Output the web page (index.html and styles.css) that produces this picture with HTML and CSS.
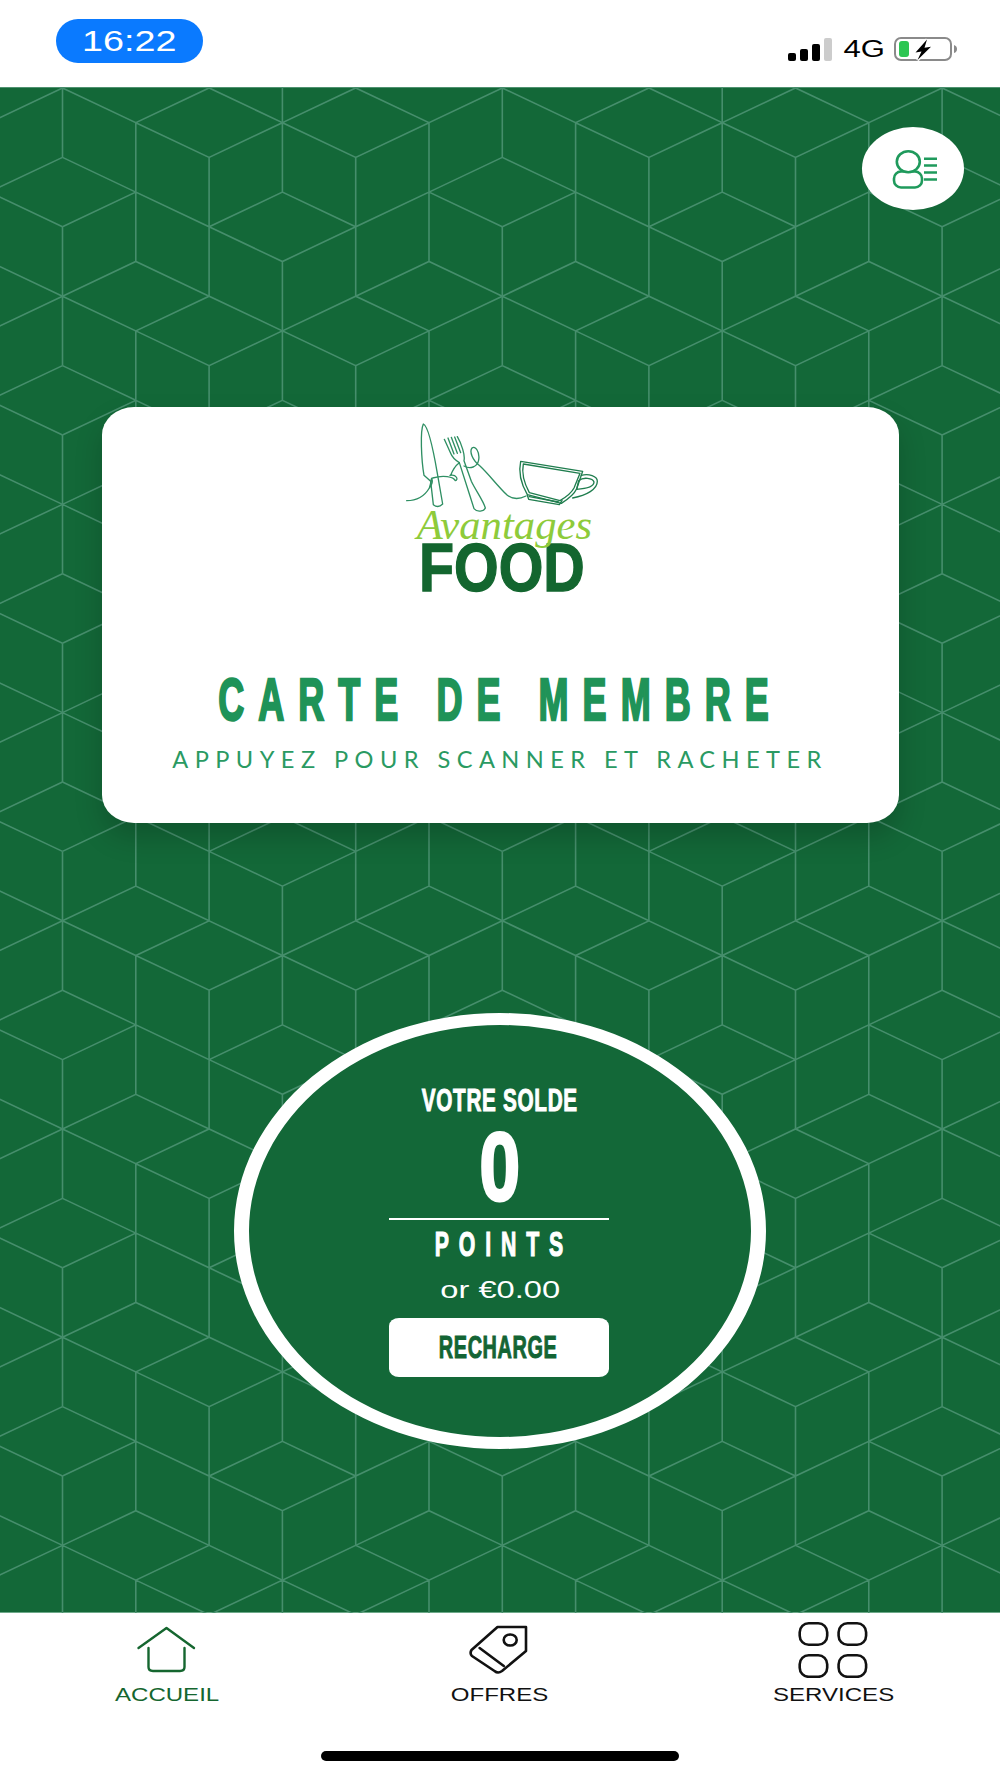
FILE: index.html
```html
<!DOCTYPE html>
<html lang="fr">
<head>
<meta charset="utf-8">
<title>Avantages Food</title>
<link rel="stylesheet" href="styles.css">
</head>
<body>
<div class="app">
  <header class="status">
    <div class="clock"><span class="clock-text">16:22</span></div>
    <div class="status-right">
      <svg class="signal" width="44" height="23" viewBox="0 0 44 23">
        <rect x="0" y="15" width="8" height="8" rx="2" fill="#000"/>
        <rect x="12" y="11" width="8" height="12" rx="2" fill="#000"/>
        <rect x="24" y="6" width="8" height="17" rx="2" fill="#000"/>
        <rect x="36" y="0" width="8" height="23" rx="2" fill="#ccc"/>
      </svg>
      <span class="net">4G</span>
      <svg class="battery" width="64" height="24" viewBox="0 0 64 24">
        <rect x="1" y="1" width="56" height="22" rx="6" fill="#fff" stroke="#8a8a8a" stroke-width="2"/>
        <path d="M60 8 q3 1 3 4 t-3 4 z" fill="#8a8a8a"/>
        <rect x="5" y="4" width="10" height="16" rx="3" fill="#2dc653"/>
        <path d="M33 2.500 L21.500 15.500 L27.500 14.500 L23.500 23 L37 9.800 L30.500 10.800 Z" fill="#000" stroke="#fff" stroke-width="3" paint-order="stroke"/>
      </svg>
    </div>
  </header>

  <main class="main">
    <svg class="pattern" width="1000" height="1526" viewBox="0 0 1000 1526" aria-hidden="true">
      <defs>
        <path id="tile" d="M0 0V69.4M0 138.8V208.2M73.3 34.7V173.5M146.6 69.4V208.2M219.9 34.7V104.1M219.9 173.5V242.9M293.2 69.4V208.2M366.5 34.7V173.5M0 0L73.3 34.7L146.6 0L219.9 34.7L293.2 0L366.5 34.7L439.8 0M73.3 34.7L146.6 69.4L219.9 34.7L293.2 69.4L366.5 34.7M0 69.4L73.3 104.1M366.5 104.1L439.8 69.4M0 138.8L73.3 104.1L146.6 138.8L219.9 104.1L293.2 138.8L366.5 104.1L439.8 138.8M146.6 138.8L219.9 173.5L293.2 138.8M0 208.2L73.3 173.5L146.6 208.2M293.2 208.2L366.5 173.5L439.8 208.2"/>
        <g id="tile-row">
          <use href="#tile" x="-377.3"/>
          <use href="#tile" x="62.5"/>
          <use href="#tile" x="502.3"/>
          <use href="#tile" x="942.1"/>
        </g>
      </defs>
      <g class="pattern-lines">
        <use href="#tile-row" y="-207.2"/>
        <use href="#tile-row" y="1"/>
        <use href="#tile-row" y="209.2"/>
        <use href="#tile-row" y="417.4"/>
        <use href="#tile-row" y="625.6"/>
        <use href="#tile-row" y="833.8"/>
        <use href="#tile-row" y="1042"/>
        <use href="#tile-row" y="1250.2"/>
        <use href="#tile-row" y="1458.4"/>
      </g>
    </svg>

    <div class="content">
      <button class="profile" aria-label="Profil">
        <svg width="50" height="40" viewBox="0 0 50 40" fill="none" stroke="#1f9a5c" stroke-width="2.600">
          <rect x="6" y="22.5" width="28" height="16" rx="7"/>
          <ellipse cx="20.3" cy="12.7" rx="11.5" ry="10.500" fill="#fff"/>
          <path d="M36 9.8H49M36 16.5H49M36 23.5H49M36 30.5H49"/>
        </svg>
      </button>

      <section class="card">
        <svg class="logo" width="220" height="195" viewBox="0 0 660 585">
          <g fill="none" stroke="#2f8f63" stroke-width="4" stroke-linejoin="round" stroke-linecap="round">
            <path d="M100 42C90 62 94 150 102 196L122 214L130 284C140 292 150 290 158 282L142 190C130 120 114 48 100 42Z"/>
            <path d="M163 88L182 130C188 146 198 152 208 158L240 258L252 296C262 308 282 304 286 294C280 272 256 240 244 214L222 152C226 136 214 100 202 80M174 84L192 132M184 82L202 130M194 81L212 128"/>
            <path d="M208 158C200 164 190 174 182 196M50 272C84 272 104 258 118 234C126 214 120 204 128 204C160 194 190 200 196 212C206 210 200 192 180 196M118 234C124 226 130 220 126 208"/>
            <path d="M222 168C240 178 262 172 266 150C270 126 256 106 246 114C238 124 246 150 270 168C300 196 320 226 352 256C368 268 384 270 408 258"/>
          </g>
          <g fill="none" stroke="#1f7d4e" stroke-width="4" stroke-linejoin="round" stroke-linecap="round">
            <path d="M392 154L578 184L560 236C552 254 536 266 514 280L412 254C396 226 384 190 392 154Z"/>
            <path d="M400 162L570 190L552 234C544 250 530 260 510 272L418 248C404 222 394 192 400 162Z"/>
            <path d="M412 256L416 268L508 284L516 272M418 260L506 276"/>
            <path d="M574 196C596 190 622 198 622 214C622 238 590 256 548 264M566 212C580 200 608 204 612 216C612 230 590 236 560 238L566 212Z"/>
          </g>
          <text class="logo-food" transform="translate(87 542) scale(.84 1)">FOOD</text>
          <text class="logo-script" x="80" y="386">Avantages</text>
        </svg>
        <h1 class="card-title">CARTE DE MEMBRE</h1>
        <p class="card-sub">APPUYEZ POUR SCANNER ET RACHETER</p>
      </section>

      <section class="balance">
        <div class="balance-label">VOTRE SOLDE</div>
        <div class="balance-value">0</div>
        <div class="balance-rule"></div>
        <div class="balance-unit">POINTS</div>
        <div class="balance-money"><span>or €0.00</span></div>
        <button class="recharge"><span>RECHARGE</span></button>
      </section>
    </div>
  </main>

  <footer class="tabbar">
    <nav class="tabs">
      <a class="tab tab-active">
        <svg width="80" height="56" viewBox="0 0 80 56" fill="none" stroke="currentColor" stroke-width="2.4" stroke-linecap="round" stroke-linejoin="round">
          <path d="M11.5 26L39.5 6L67 26"/>
          <path d="M21.500 26V45Q21.500 49 26 49H53Q57.500 49 57.500 45V26"/>
        </svg>
        <span class="tab-label">ACCUEIL</span>
      </a>
      <a class="tab">
        <svg width="80" height="56" viewBox="0 0 80 56" fill="none" stroke="currentColor" stroke-width="2.6" stroke-linecap="round" stroke-linejoin="round">
          <path d="M37.5 5H66V29L42 49Q38 52 34.500 49L12 34Q9.500 31.500 11.500 28Z"/>
          <path d="M19.600 26L43.800 44"/>
          <ellipse cx="50.200" cy="18" rx="6.500" ry="5.500"/>
        </svg>
        <span class="tab-label">OFFRES</span>
      </a>
      <a class="tab">
        <svg width="80" height="56" viewBox="0 0 80 56" fill="none" stroke="currentColor" stroke-width="2.6">
          <rect x="6.700" y="1.300" width="27.500" height="21.500" rx="9"/>
          <rect x="45.600" y="1.300" width="27.500" height="21.500" rx="9"/>
          <rect x="6.700" y="33.300" width="27.500" height="21.500" rx="9"/>
          <rect x="45.600" y="33.300" width="27.500" height="21.500" rx="9"/>
        </svg>
        <span class="tab-label">SERVICES</span>
      </a>
    </nav>
    <div class="home-indicator"></div>
  </footer>
</div>
</body>
</html>
```

FILE: styles.css
```css
* { box-sizing: border-box; }
html, body { margin: 0; padding: 0; background: #fff; }
body { font-family: "Liberation Sans", Arial, sans-serif; color: #000; }

.app { width: 1000px; height: 1778px; display: flex; flex-direction: column; overflow: hidden; }

/* Status bar */
.status { height: 87px; flex: none; display: flex; align-items: flex-start; padding: 19px 42px 0 56px; background: #fff; }
.clock { width: 147px; height: 44px; border-radius: 22px; background: #0a7aff; display: flex; align-items: center; justify-content: center; }
.clock-text { color: #fff; font-size: 29px; line-height: 44px; display: inline-block; transform: scaleX(1.3); }
.status-right { margin-left: auto; margin-top: 18px; display: flex; align-items: center; }
.signal { display: block; }
.net { width: 31px; margin: 0 14px 0 17.500px; font-size: 23px; line-height: 23px; display: inline-block; white-space: nowrap; transform: scaleX(1.35); }
.battery { display: block; }

/* Main */
.main { position: relative; flex: 1; background: #136838; border-top: 1px solid #4f9270; border-bottom: 1px solid #6ea98a; }
.pattern { position: absolute; top: -1px; left: 0; display: block; }
.pattern-lines { fill: none; stroke: #468e6c; stroke-width: 1.600; }
.content { position: relative; display: flex; flex-direction: column; align-items: center; padding-top: 39px; }

.profile { align-self: flex-end; margin-right: 36px; width: 102px; height: 83px; border: 0; padding: 0; border-radius: 50%; background: #fff; display: flex; align-items: center; justify-content: center; }
.profile svg { display: block; }

/* Card */
.card { margin-top: 197px; width: 797px; height: 416px; padding-top: 3px; border-radius: 32px / 28px; background: #fff; box-shadow: 0 14px 28px rgba(0, 0, 0, .18); display: flex; flex-direction: column; align-items: center; }
.logo { display: block; flex: none; overflow: visible; }
.logo-food { font-family: "Liberation Sans", Arial, sans-serif; font-weight: 700; font-size: 205px; fill: #13662f; stroke: #13662f; stroke-width: 4px; }
.logo-script { font-family: "Liberation Serif", serif; font-style: italic; font-size: 128px; fill: #8ecb3a; }
.card-title { margin: 65px 0 0; font-size: 60px; line-height: 60px; font-weight: 700; letter-spacing: 23.400px; color: #1f9358; -webkit-text-stroke: 2.400px #1f9358; white-space: nowrap; transform: scaleX(.6); }
.card-sub { margin: 14.500px 0 0; font-family: Lato, sans-serif; font-size: 23.600px; line-height: 28px; font-weight: 400; letter-spacing: 6.440px; color: #2a9a62; white-space: nowrap; }

/* Balance */
.balance { margin-top: 190px; width: 532px; height: 436px; border-style: solid; border-color: #fff; border-width: 12px 15px; border-radius: 50%; background: #136838; padding-top: 60px; display: flex; flex-direction: column; align-items: center; color: #fff; }
.balance-label { font-size: 30.500px; line-height: 30px; font-weight: 700; -webkit-text-stroke: 1px #fff; letter-spacing: 1px; white-space: nowrap; transform: scaleX(.68); }
.balance-value { margin-top: 12px; font-size: 96px; line-height: 80px; font-weight: 700; -webkit-text-stroke: 3px #fff; transform: scaleX(.76); }
.balance-rule { margin: 11px 2px 0 0; width: 220px; height: 2px; background: #fff; flex: none; }
.balance-unit { margin-top: 8.500px; padding-left: 12px; font-size: 35.500px; line-height: 30px; font-weight: 700; letter-spacing: 16.400px; -webkit-text-stroke: 1.200px #fff; transform: scaleX(.6); }
.balance-money { margin-top: 18.500px; font-size: 23px; line-height: 26px; white-space: nowrap; transform: scaleX(1.42); }
.recharge { margin: 15px 2px 0 0; width: 220px; height: 59px; flex: none; border: 0; padding: 0 2px 0 0; border-radius: 10px / 8px; background: #fff; color: #136434; font-family: inherit; font-size: 31.500px; font-weight: 700; display: flex; align-items: center; justify-content: center; }
.recharge span { display: inline-block; -webkit-text-stroke: 1px #136434; letter-spacing: 1px; transform: scaleX(.63); }

/* Tab bar */
.tabbar { flex: none; height: 165px; background: #fff; padding-top: 9px; display: flex; flex-direction: column; align-items: center; }
.tabs { width: 100%; display: grid; grid-template-columns: repeat(3, 1fr); }
.tab { display: flex; flex-direction: column; align-items: center; color: #111; }
.tab svg { display: block; }
.tab-active { color: #15662f; }
.tab-label { margin-top: 7px; font-size: 18.500px; line-height: 20px; white-space: nowrap; transform: scaleX(1.3); }
.home-indicator { margin-top: 46px; width: 358px; height: 10px; border-radius: 5px; background: #000; }
```
